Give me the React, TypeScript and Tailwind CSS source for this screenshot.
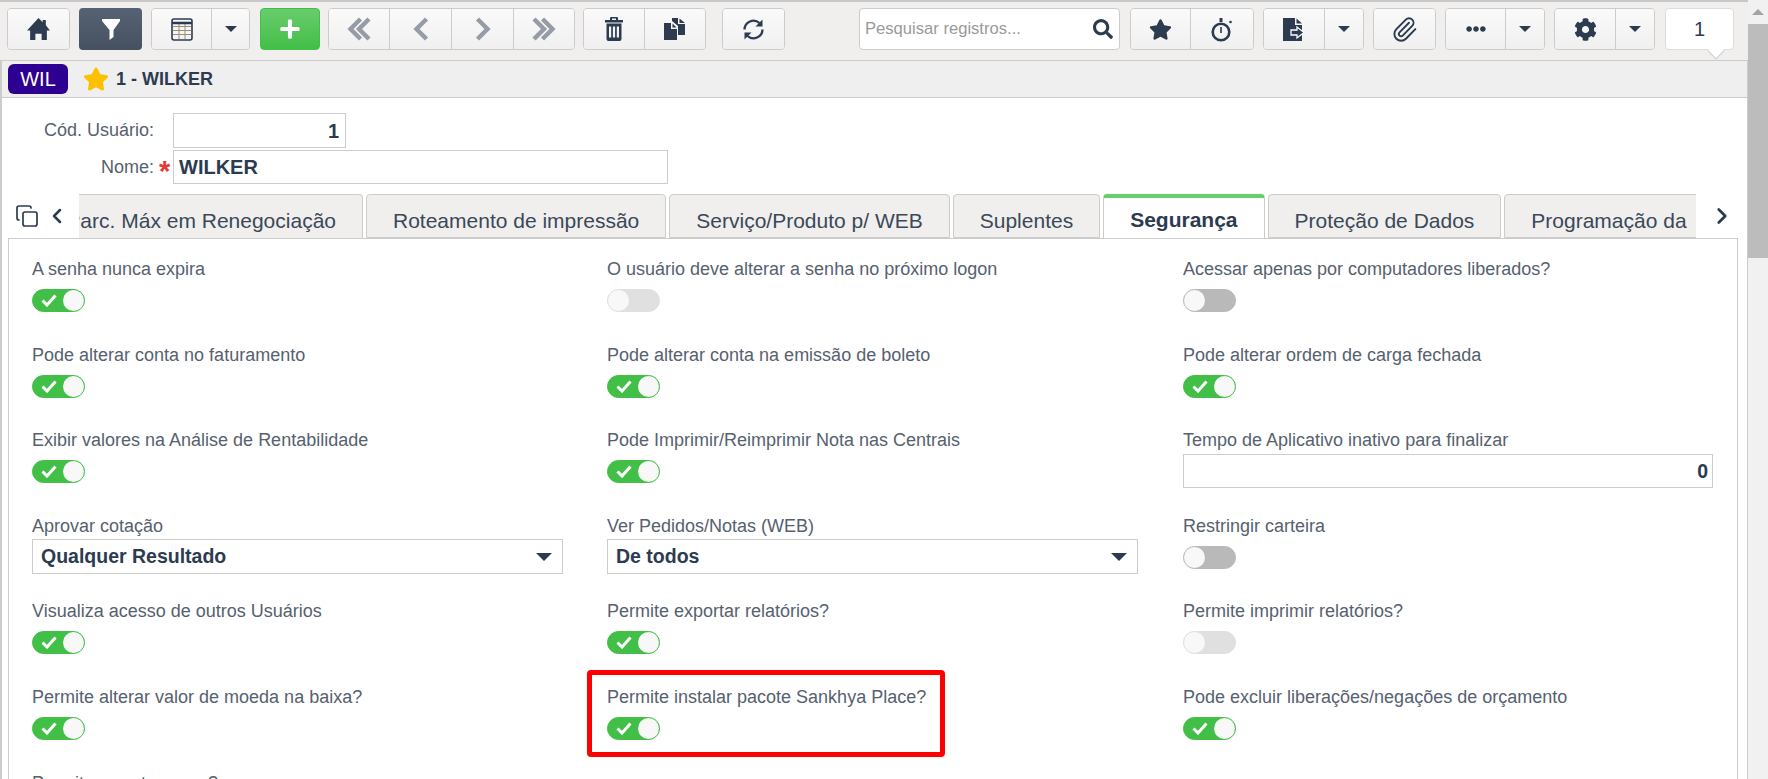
import { ChevronLeft, ChevronRight, Copy, Paperclip } from "lucide-react";
import { FaPlus, FaSearch, FaStar, FaEllipsisH, FaCog } from "react-icons/fa";

const navy = "text-[#2c3b50]";

type Field =
  | { label: string; kind: "on" | "off" | "disabled" }
  | { label: string; kind: "select"; value: string }
  | { label: string; kind: "number"; value: string };

const fields: Field[] = [
  { label: "A senha nunca expira", kind: "on" },
  { label: "O usuário deve alterar a senha no próximo logon", kind: "disabled" },
  { label: "Acessar apenas por computadores liberados?", kind: "off" },
  { label: "Pode alterar conta no faturamento", kind: "on" },
  { label: "Pode alterar conta na emissão de boleto", kind: "on" },
  { label: "Pode alterar ordem de carga fechada", kind: "on" },
  { label: "Exibir valores na Análise de Rentabilidade", kind: "on" },
  { label: "Pode Imprimir/Reimprimir Nota nas Centrais", kind: "on" },
  { label: "Tempo de Aplicativo inativo para finalizar", kind: "number", value: "0" },
  { label: "Aprovar cotação", kind: "select", value: "Qualquer Resultado" },
  { label: "Ver Pedidos/Notas (WEB)", kind: "select", value: "De todos" },
  { label: "Restringir carteira", kind: "off" },
  { label: "Visualiza acesso de outros Usuários", kind: "on" },
  { label: "Permite exportar relatórios?", kind: "on" },
  { label: "Permite imprimir relatórios?", kind: "disabled" },
  { label: "Permite alterar valor de moeda na baixa?", kind: "on" },
  { label: "Permite instalar pacote Sankhya Place?", kind: "on" },
  { label: "Pode excluir liberações/negações de orçamento", kind: "on" },
  { label: "Permite reportar erros?", kind: "on" },
];

const tabs = ["Roteamento de impressão", "Serviço/Produto p/ WEB", "Suplentes"];

const HomeIcon = () => (
  <svg width="23" height="22" viewBox="0 0 22 21" fill="#2c3b50">
    <path d="M11 0l4 4V2h3v5l4 5h-3v9h-5v-6H8v6H3v-9H0z" />
  </svg>
);

const FilterIcon = () => (
  <svg width="20" height="23" viewBox="0 0 20 23" fill="#fff">
    <path d="M1 1h18v2l-6.5 9v7l-4 3V12L1 3z" />
  </svg>
);

const TableIcon = () => (
  <svg width="22" height="23" viewBox="0 0 22 23" fill="none">
    <path d="M2 8.500h18M2 12.500h18M2 16.500h18M8 6v15M14 6v15" stroke="#a08b74" strokeWidth="1" />
    <rect x="1" y="1" width="20" height="21" rx="2" stroke="#2c3b50" strokeWidth="1.600" />
    <path d="M1 5h20" stroke="#2c3b50" strokeWidth="2.400" />
  </svg>
);

// setas cinzas da navegacao de registros
const Arrow = ({ dir, double }: { dir: "left" | "right"; double?: boolean }) => (
  <svg width={double ? 24 : 16} height="24" viewBox={double ? "0 0 24 24" : "0 0 16 24"} fill="none" stroke="#959ca5" strokeWidth="4.400">
    <g transform={dir === "right" ? `translate(${double ? 24 : 16} 0) scale(-1 1)` : undefined}>
      <path d="M13.500 2L3.500 12l10 10" />
      {double && <path d="M22 2L12 12l10 10" />}
    </g>
  </svg>
);

const TrashIcon = () => (
  <svg width="18" height="24" viewBox="0 0 18 24" fill="#2c3b50">
    <path fillRule="evenodd" d="M6 0h6a1 1 0 0 1 1 1v2h5v2.500H0V3h5V1a1 1 0 0 1 1-1zm1 1.500V3h4V1.500z" />
    <path fillRule="evenodd" d="M1.500 6.500h15V22a2 2 0 0 1-2 2h-11a2 2 0 0 1-2-2zm2.500 3v11h2.200v-11zm3.900 0v11h2.200v-11zm3.900 0v11H14v-11z" />
  </svg>
);

const PagesIcon = () => (
  <svg width="22" height="22" viewBox="0 0 22 22" fill="#2c3b50">
    <path d="M8 0h6v6h7v11h-7V8L8 3z" />
    <path d="M15.500 0.500L21 5h-5.500z" />
    <path d="M0 5h7v6h6v11H0z" />
    <path d="M8.500 5.500l4 4h-4z" />
  </svg>
);

const RefreshIcon = () => (
  <svg width="23" height="23" viewBox="0 0 23 23" fill="none" stroke="#2c3b50" strokeWidth="2.300">
    <path d="M2.500 11.500a9 9 0 0 1 15-6.500" />
    <path d="M20.500 11.500a9 9 0 0 1-15 6.500" />
    <path d="M20.500 1.500v7h-7z" fill="#2c3b50" stroke="none" />
    <path d="M2.500 21.500v-7h7z" fill="#2c3b50" stroke="none" />
  </svg>
);

const TimerIcon = () => (
  <svg width="22" height="25" viewBox="0 0 22 25" fill="none" stroke="#2c3b50">
    <circle cx="10" cy="15" r="8.300" strokeWidth="2.600" />
    <path d="M10 10v6" strokeWidth="1.600" />
    <path d="M10 1v4" strokeWidth="3" />
    <circle cx="19.500" cy="5" r="1.300" fill="#2c3b50" stroke="none" />
  </svg>
);

const ExportIcon = () => (
  <svg width="22" height="23" viewBox="0 0 22 23" fill="#2c3b50">
    <path d="M0 0h12v7h7v16H0z" />
    <path d="M13.500 0.500L19 5.500h-5.500z" />
    <path d="M8 12h6V9l7 5.500-7 5.500v-3H8z" stroke="#fff" strokeWidth="1.300" />
  </svg>
);

const Caret = () => (
  <span className="h-0 w-0 border-x-[6px] border-t-[6px] border-x-transparent border-t-[#2c3b50]" />
);

// grupo de botoes com divisoria, como na barra do sistema
const Group = ({ widths, children }: { widths: number[]; children: React.ReactNode[] }) => (
  <div className="flex h-[42px] divide-x divide-[#cccccc] overflow-hidden rounded border border-[#cccccc]">
    {children.map((child, i) => (
      <div
        key={i}
        className="flex h-full items-center justify-center bg-gradient-to-b from-[#fafafa] to-[#f0f0f0]"
        style={{ width: widths[i] }}
      >
        {child}
      </div>
    ))}
  </div>
);

const Toggle = ({ kind }: { kind: "on" | "off" | "disabled" }) => {
  if (kind === "on") {
    return (
      <div className="flex h-[23px] w-[53px] items-center justify-between rounded-full border border-[#41bf46] bg-[#41bf46] pl-[8px]">
        <svg width="16" height="13" viewBox="0 0 16 13" fill="none" stroke="#fff" strokeWidth="3">
          <path d="M1.500 6.500l4.500 4.500 8.500-9.500" />
        </svg>
        <span className="h-[21px] w-[21px] rounded-full bg-[#f8f8f8]" />
      </div>
    );
  }
  const track = kind === "off" ? "bg-[#b9b9b9] border-[#b9b9b9]" : "bg-[#e0e0e0] border-[#e0e0e0]";
  return (
    <div className={`flex h-[23px] w-[53px] items-center rounded-full border ${track}`}>
      <span className="h-[21px] w-[21px] rounded-full bg-[#f8f8f8]" />
    </div>
  );
};

const FieldCell = ({ field }: { field: Field }) => (
  <div className="flex h-[85.6px] flex-col">
    <div className="h-[24px] text-[18px] leading-[24px] whitespace-nowrap text-[#56616f]">{field.label}</div>
    {field.kind === "select" && (
      <div className="mt-[1px] flex h-[35px] w-[531px] items-center justify-between border border-[#cccccc] bg-white pt-[1px] pr-[10px] pl-[8px]">
        <span className={`text-[19.5px] font-bold ${navy}`}>{field.value}</span>
        <span className="h-0 w-0 border-x-[8px] border-t-[8px] border-x-transparent border-t-[#2c3b50]" />
      </div>
    )}
    {field.kind === "number" && (
      <div className={`mt-[2px] flex h-[34px] w-[530px] items-center justify-end border border-[#cccccc] bg-white pr-[4px] text-[19.5px] font-bold ${navy}`}>
        {field.value}
      </div>
    )}
    {(field.kind === "on" || field.kind === "off" || field.kind === "disabled") && (
      <div className="mt-[8px]">
        <Toggle kind={field.kind} />
      </div>
    )}
  </div>
);

export default function App() {
  return (
    <div className="flex h-[779px] w-[1768px] overflow-hidden bg-white font-['Liberation_Sans',Arial,sans-serif]">
      <div className="flex w-[1748px] flex-col">
        {/* barra de ferramentas */}
        <div className="flex h-[60px] shrink-0 items-start border-t-2 border-[#c8c8c8] bg-[#f0efee] pt-[6px] pl-[7px]">
          <Group widths={[61]}>{[<HomeIcon />]}</Group>
          <div className="ml-[9px] flex h-[42px] w-[63px] items-center justify-center rounded bg-gradient-to-b from-[#566374] to-[#465060]">
            <FilterIcon />
          </div>
          <div className="ml-[9px]">
            <Group widths={[60, 37]}>{[<TableIcon />, <Caret />]}</Group>
          </div>
          <div className="ml-[10px] flex h-[42px] w-[60px] items-center justify-center rounded border border-[#41bf46] bg-gradient-to-b from-[#68cc6c] to-[#41bf46]">
            <FaPlus size={22} className="text-white" />
          </div>
          <div className="ml-[8px]">
            <Group widths={[61, 62, 62, 60]}>
              {[
                <Arrow dir="left" double />,
                <Arrow dir="left" />,
                <Arrow dir="right" />,
                <Arrow dir="right" double />,
              ]}
            </Group>
          </div>
          <div className="ml-[8px]">
            <Group widths={[61, 60]}>{[<TrashIcon />, <PagesIcon />]}</Group>
          </div>
          <div className="ml-[16px]">
            <Group widths={[61]}>{[<RefreshIcon />]}</Group>
          </div>
          <div className="ml-[74px] flex h-[42px] w-[261px] items-center justify-between rounded border border-[#cccccc] bg-white pr-[6px] pl-[5px]">
            <span className="text-[16.6px] text-[#999999]">Pesquisar registros...</span>
            <FaSearch size={20} className={navy} />
          </div>
          <div className="ml-[10px]">
            <Group widths={[60, 62]}>{[<FaStar size={23} className={navy} />, <TimerIcon />]}</Group>
          </div>
          <div className="ml-[9px]">
            <Group widths={[61, 38]}>{[<ExportIcon />, <Caret />]}</Group>
          </div>
          <div className="ml-[9px]">
            <Group widths={[61]}>{[<Paperclip size={27} strokeWidth={1.7} className={navy} />]}</Group>
          </div>
          <div className="ml-[9px]">
            <Group widths={[60, 38]}>{[<FaEllipsisH size={20} className={navy} />, <Caret />]}</Group>
          </div>
          <div className="ml-[9px]">
            <Group widths={[61, 38]}>{[<FaCog size={23} className={navy} />, <Caret />]}</Group>
          </div>
          <div className="relative ml-[10px] flex h-[42px] w-[69px] items-center justify-center rounded border border-[#dddddd] bg-white text-[20px] text-[#2c3b50]">
            1
            <span className="absolute top-[36px] left-[44px] h-[12px] w-[12px] rotate-45 border-r border-b border-[#cccccc] bg-white" />
          </div>
        </div>

        <div className="flex min-h-0 flex-1 flex-col border-r border-l-2 border-[#cccccc]">
          {/* titulo do registro */}
          <div className="flex h-[38px] shrink-0 items-center border-y border-[#cccccc] bg-[#efefef] pl-[6px]">
            <span className="flex h-[30px] w-[60px] items-center justify-center rounded-md bg-[#2e0091] text-[20px] text-white">
              WIL
            </span>
            <FaStar size={26} className="ml-[15px] text-[#ffc000]" />
            <span className={`ml-[7px] text-[18px] font-bold ${navy}`}>1 - WILKER</span>
          </div>

          {/* cabecalho do formulario */}
          <div className="flex flex-col gap-[2px] pt-[15px]">
            <div className="flex items-center">
              <span className="w-[152px] text-right text-[18px] text-[#56616f]">Cód. Usuário:</span>
              <div className={`ml-[19px] flex h-[35px] w-[173px] items-center justify-end border border-[#cccccc] pr-[6px] text-[20px] font-bold ${navy}`}>
                1
              </div>
            </div>
            <div className="flex items-center">
              <span className="w-[152px] text-right text-[18px] text-[#56616f]">Nome:</span>
              <span className="ml-[5px] h-[22px] w-[14px] text-[29px] leading-[30px] font-bold text-[#e53935]">*</span>
              <div className={`flex h-[34px] w-[495px] items-center border border-[#cccccc] pl-[5px] text-[20px] font-bold ${navy}`}>
                WILKER
              </div>
            </div>
          </div>

          {/* abas */}
          <div className="mt-[10px] flex h-[44px] shrink-0 items-center">
            <Copy size={24} strokeWidth={1.7} className={`ml-[13px] ${navy}`} />
            <ChevronLeft size={24} strokeWidth={2.5} className={`ml-[6px] ${navy}`} />
            <div className="ml-[10px] flex h-full w-[1617px] gap-[3px] overflow-hidden">
              <div className="flex w-[284px] shrink-0 justify-end overflow-hidden rounded-tr border-t border-r border-[#cccccc] bg-[#f0efee] pr-[26px] text-[21px] leading-[51px] whitespace-nowrap text-[#3b4858]">
                Parc. Máx em Renegociação
              </div>
              {tabs.map((tab) => (
                <div key={tab} className="shrink-0 rounded-t border border-[#cccccc] bg-[#f0efee] px-[26px] text-[21px] leading-[51px] whitespace-nowrap text-[#3b4858]">
                  {tab}
                </div>
              ))}
              <div className={`relative z-10 h-[45px] shrink-0 rounded-t border-x border-t-4 border-x-[#cccccc] border-t-[#66cf6a] bg-white px-[26px] text-[21px] leading-[43px] font-bold whitespace-nowrap ${navy}`}>
                Segurança
              </div>
              <div className="shrink-0 rounded-t border border-[#cccccc] bg-[#f0efee] px-[26px] text-[21px] leading-[51px] whitespace-nowrap text-[#3b4858]">
                Proteção de Dados
              </div>
              <div className="w-[300px] shrink-0 rounded-t border border-[#cccccc] bg-[#f0efee] px-[26px] text-[21px] leading-[51px] whitespace-nowrap text-[#3b4858]">
                Programação da
              </div>
            </div>
            <ChevronRight size={26} strokeWidth={2.5} className={`ml-[13px] ${navy}`} />
          </div>

          {/* painel da aba segurança */}
          <div className="relative mr-[9px] ml-[6px] min-h-0 flex-1 border border-b-0 border-[#cccccc] pt-[18px] pl-[23px]">
            <div className="grid grid-cols-[575px_576px_1fr]">
              {fields.map((field) => (
                <FieldCell key={field.label} field={field} />
              ))}
            </div>
            {/* destaque em vermelho da captura */}
            <div className="absolute top-[431px] left-[578px] h-[87px] w-[358px] rounded-sm border-[5px] border-[#ff0000]" />
          </div>
        </div>
      </div>

      {/* barra de rolagem */}
      <div className="flex w-[20px] flex-col bg-[#f1f1f1]">
        <div className="flex h-[24px] items-center justify-center">
          <span className="h-0 w-0 border-x-[6px] border-b-[6px] border-x-transparent border-b-[#a3a3a3]" />
        </div>
        <div className="h-[234px] bg-[#bcbcbc]" />
      </div>
    </div>
  );
}
